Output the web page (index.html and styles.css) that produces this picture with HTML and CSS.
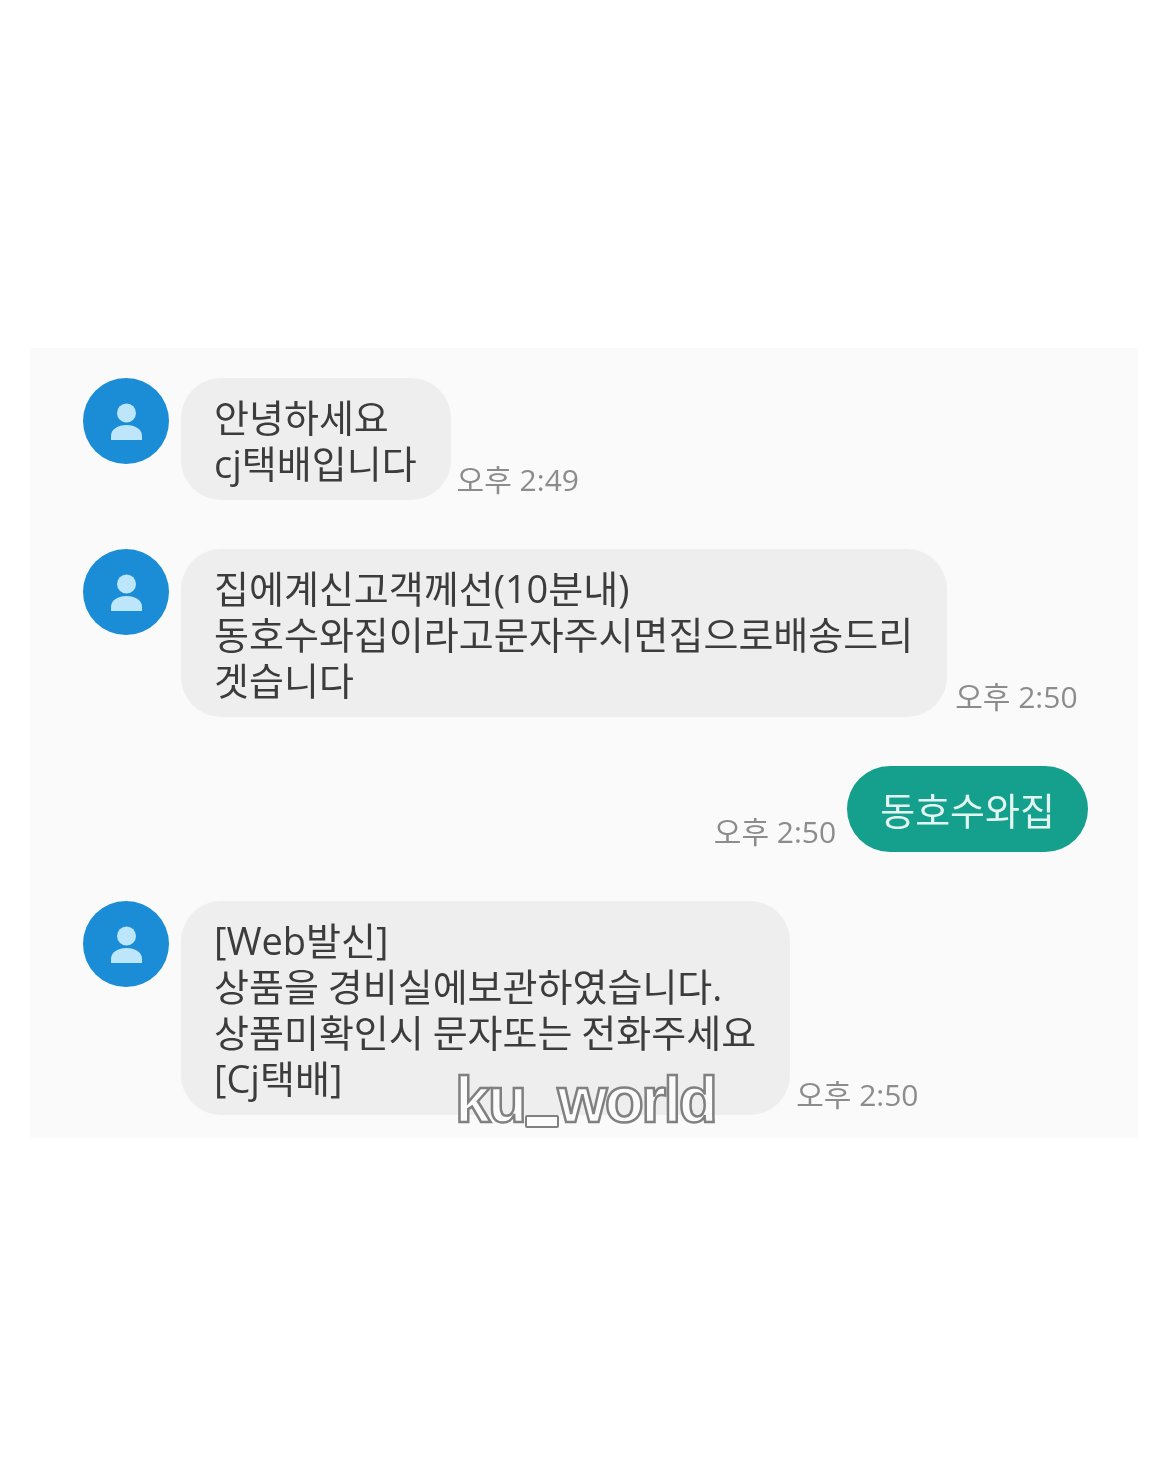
FILE: index.html
```html
<!DOCTYPE html>
<html lang="ko">
  <head>
    <meta charset="UTF-8" />
    <meta name="viewport" content="width=device-width, initial-scale=1.0" />
    <title>문자 메시지</title>
    <link rel="stylesheet" href="styles.css">
  </head>
  <body>
    <div class="chat">
      <div class="row">
        <svg class="avatar" viewBox="0 0 86 86">
          <circle cx="43" cy="43" r="43" fill="#1a8dd6" />
          <circle cx="43.5" cy="35" r="9.5" fill="#bde6fb" />
          <path d="M28 62v-4c0-7 7-11 15.500-11S59 51 59 58v4z" fill="#bde6fb" />
        </svg>
        <div class="bubble">안녕하세요<br />cj택배입니다</div>
        <span class="time">오후 2:49</span>
      </div>
      <div class="row">
        <svg class="avatar" viewBox="0 0 86 86">
          <circle cx="43" cy="43" r="43" fill="#1a8dd6" />
          <circle cx="43.5" cy="35" r="9.5" fill="#bde6fb" />
          <path d="M28 62v-4c0-7 7-11 15.500-11S59 51 59 58v4z" fill="#bde6fb" />
        </svg>
        <div class="bubble">집에계신고객께선(10분내)<br />동호수와집이라고문자주시면집으로배송드리<br />겟습니다</div>
        <span class="time time-far">오후 2:50</span>
      </div>
      <div class="row sent">
        <span class="time">오후 2:50</span>
        <div class="bubble">동호수와집</div>
      </div>
      <div class="row">
        <svg class="avatar" viewBox="0 0 86 86">
          <circle cx="43" cy="43" r="43" fill="#1a8dd6" />
          <circle cx="43.5" cy="35" r="9.5" fill="#bde6fb" />
          <path d="M28 62v-4c0-7 7-11 15.500-11S59 51 59 58v4z" fill="#bde6fb" />
        </svg>
        <div class="bubble">[Web발신]<br />상품을 경비실에보관하였습니다.<br />상품미확인시 문자또는 전화주세요<br />[Cj택배]</div>
        <span class="time">오후 2:50</span>
      </div>
      <div class="watermark">ku<span class="under">_</span>world</div>
    </div>
  </body>
</html>
```

FILE: styles.css
```css
* {
  margin: 0;
  padding: 0;
  box-sizing: border-box;
}

html,
body {
  background: #fff;
}

body {
  height: 1463px;
  padding: 348px 32px 0 30px;
  font-family: "Open Sans", "Noto Sans CJK KR", sans-serif;
  overflow: hidden;
}

.chat {
  position: relative;
  height: 790px;
  padding: 30px 50px 0 53px;
  background: #fafafa;
  display: flex;
  flex-direction: column;
  gap: 49px;
}

.row {
  display: flex;
  align-items: flex-end;
  filter: blur(0.4px);
}

.avatar {
  width: 86px;
  height: 86px;
  flex-shrink: 0;
  align-self: flex-start;
  margin-right: 12px;
}

.bubble {
  padding: 16px 34px 14px 33px;
  font-size: 38px;
  line-height: 46px;
  word-spacing: -1px;
  color: #3c3c3c;
  background: #eeeeee;
  border-radius: 40px;
  white-space: nowrap;
}

.time {
  margin: 0 0 0 6px;
  font-size: 30px;
  line-height: 40px;
  color: #8c8c8c;
  white-space: nowrap;
}

.time-far {
  margin-left: 8px;
}

.sent {
  justify-content: flex-end;
}

.sent .time {
  margin: 0 11px 0 0;
}

.sent .bubble {
  padding: 21px 33px 19px;
  color: #e2f5f1;
  background: #14a08c;
  border-radius: 43px;
}

.watermark {
  position: absolute;
  left: 425px;
  top: 715px;
  font-family: "Liberation Sans", sans-serif;
  font-size: 64px;
  font-weight: 700;
  line-height: 75px;
  letter-spacing: -2.6px;
  color: #fbfbfb;
  -webkit-text-stroke: 2.5px #808080;
}

/* the glyph is too thin to keep its fill under the stroke, so the box draws it */
.under {
  display: inline-block;
  width: 34px;
  height: 13px;
  margin-right: -1px;
  vertical-align: -6px;
  overflow: hidden;
  line-height: 13px;
  color: transparent;
  -webkit-text-stroke-color: transparent;
  background: #fbfbfb;
  border: 2.5px solid #808080;
  border-radius: 2px;
}
```
